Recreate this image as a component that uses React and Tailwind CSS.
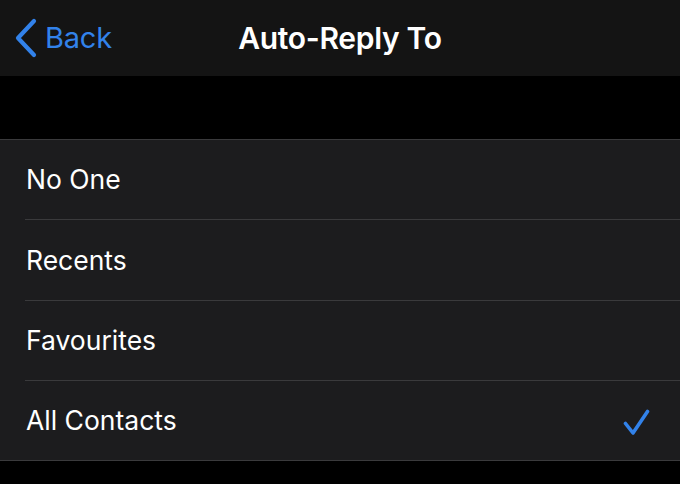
import React from "react";

const options = ["No One", "Recents", "Favourites", "All Contacts"];

const Row = ({ label, checked, last }) => (
    <div className="relative flex h-[80.3px] items-center bg-[#1c1c1e] pl-[26px] pr-[30px]">
        <span className="flex-1 text-[26.5px] text-white">{label}</span>
        {checked && (
            <svg width="27" height="27" viewBox="0 0 27 27" fill="none" className="mt-[2px]">
                <path d="M2.5 14.5 L10 24 L24.5 2.5" stroke="#3282ea" strokeWidth="3.6" strokeLinecap="round" strokeLinejoin="round" />
            </svg>
        )}
        {/* séparateur */}
        <div className={`absolute bottom-0 right-0 h-px bg-[#3a3a3c] ${last ? "left-0" : "left-[25px]"}`} />
    </div>
);

const App = () => {
    return (
        <div className="h-[484px] w-[680px] overflow-hidden bg-black" style={{ fontFamily: "Inter, 'Noto Sans', sans-serif" }}>
            {/* barre de navigation */}
            <div className="relative flex h-[76px] items-center bg-[#141414]">
                <div className="flex items-center pl-[14px] text-[#3282ea]">
                    <svg width="24" height="40" viewBox="0 0 24 40" fill="none">
                        <path d="M20 3 L4 20 L20 37" stroke="#3282ea" strokeWidth="4.2" strokeLinecap="round" strokeLinejoin="round" />
                    </svg>
                    <span className="ml-[7px] text-[29px] tracking-[-0.2px]">Back</span>
                </div>
                <div className="absolute inset-x-0 top-0 flex h-[76px] items-center justify-center pointer-events-none">
                    <span className="text-[30px] font-semibold tracking-[-0.3px] text-white">Auto-Reply To</span>
                </div>
            </div>

            <div className="h-[64px] border-b border-[#3a3a3c] bg-black" />

            <div>
                {options.map((opt, i) => (
                    <Row key={opt} label={opt} checked={opt === "All Contacts"} last={i === options.length - 1} />
                ))}
            </div>
        </div>
    );
};

export default App;
